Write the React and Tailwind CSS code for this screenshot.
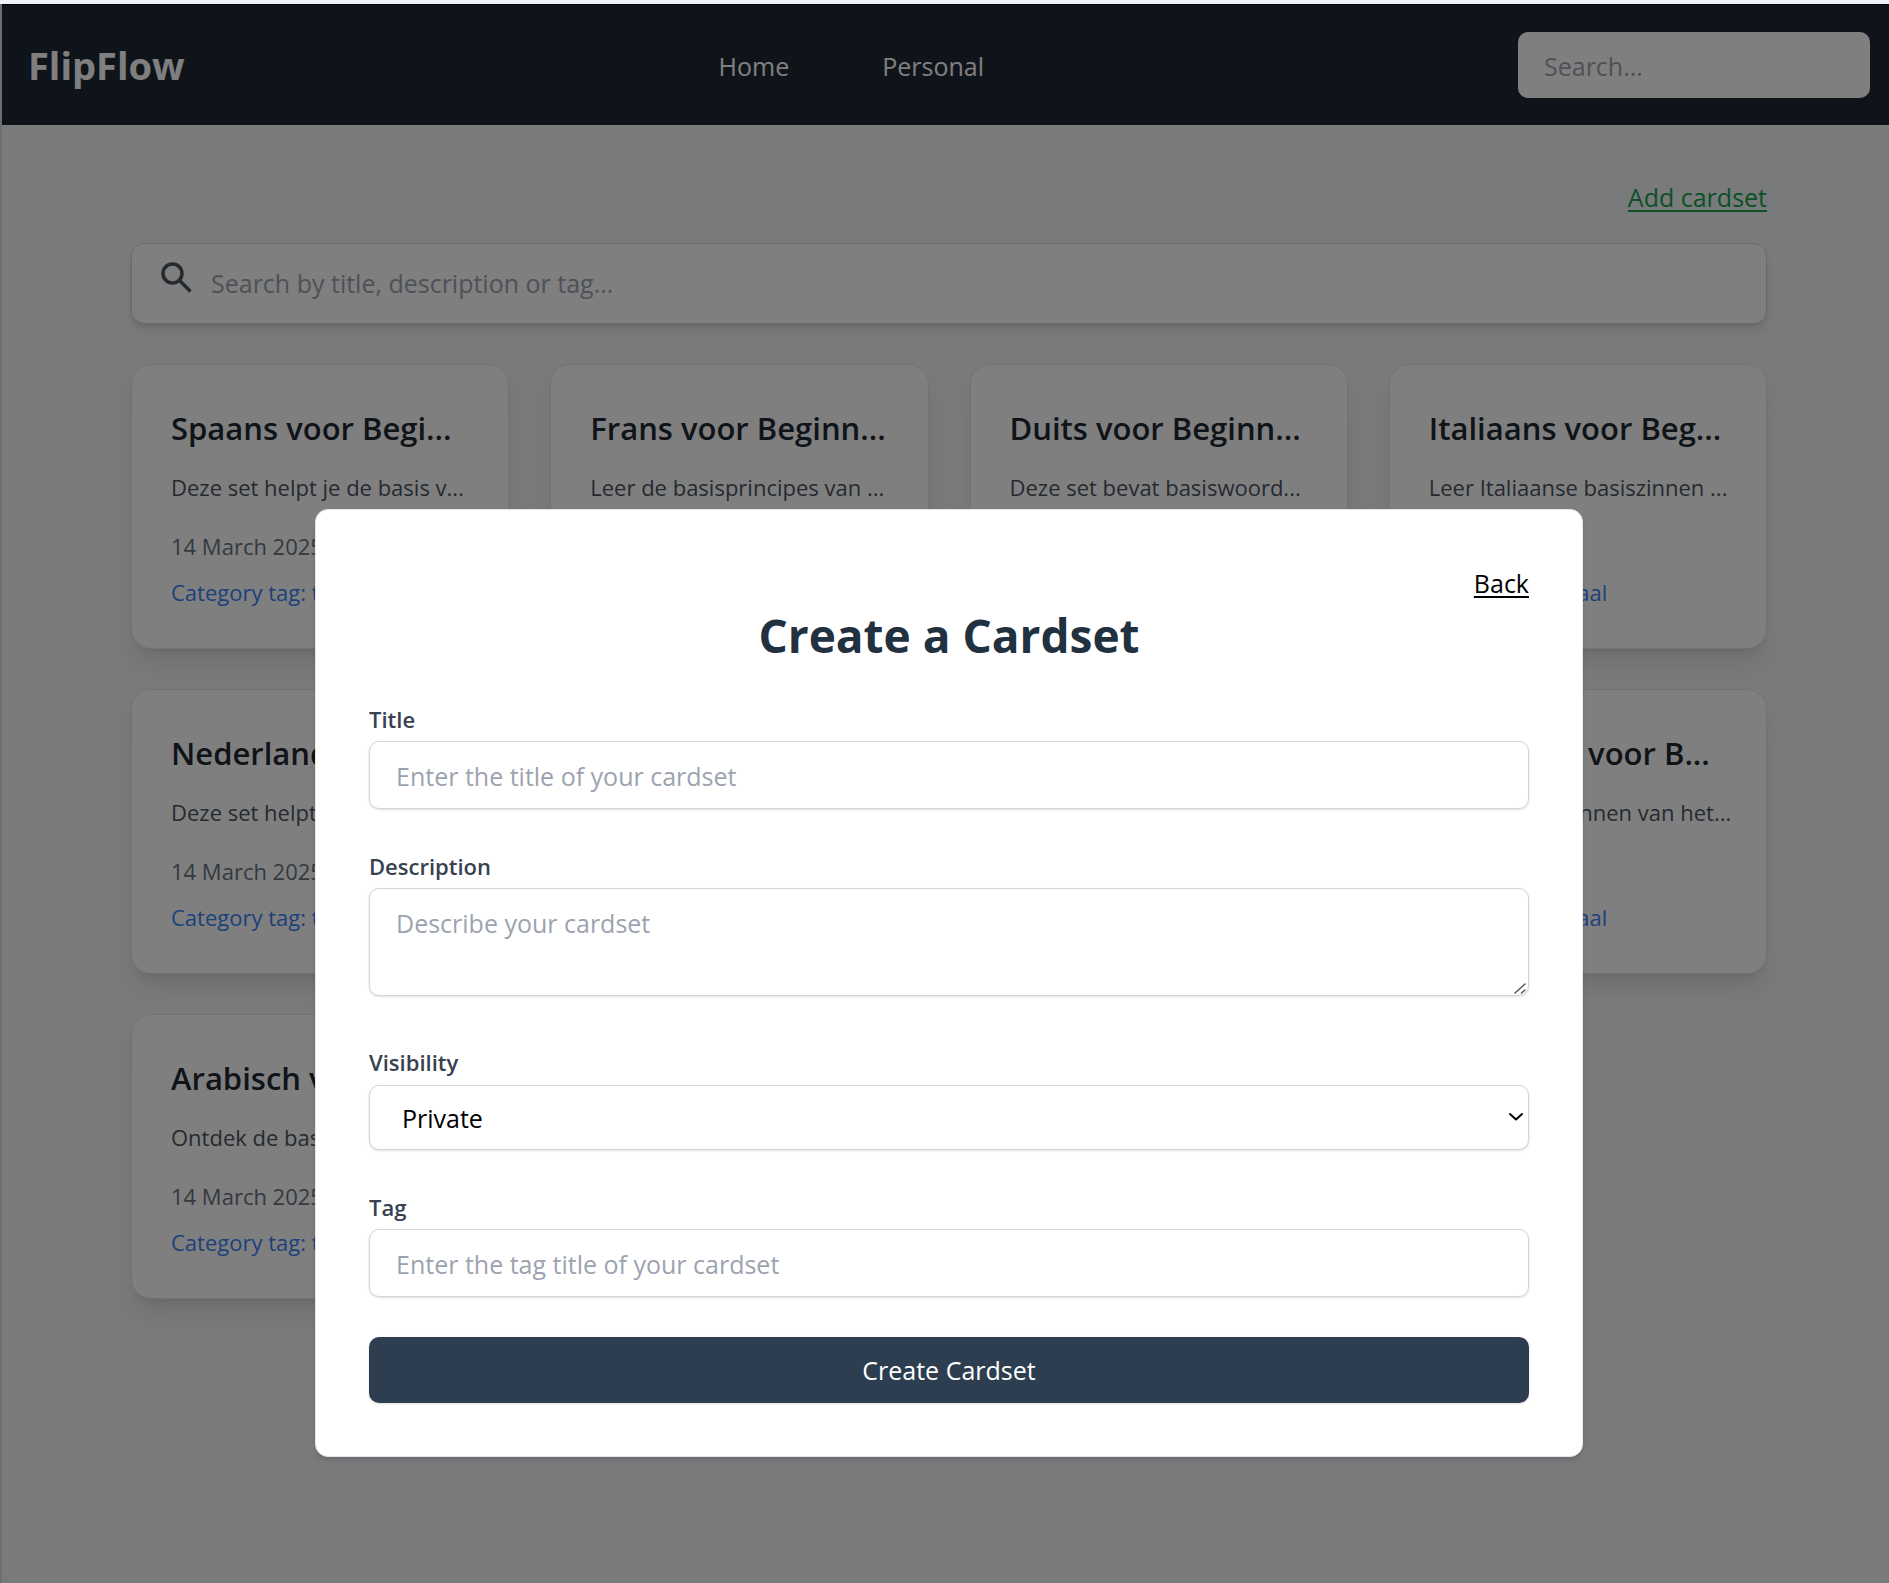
import React from "react";

const cards = [
  { title: "Spaans voor Begi...", text: "Deze set helpt je de basis v..." },
  { title: "Frans voor Beginn...", text: "Leer de basisprincipes van ..." },
  { title: "Duits voor Beginn...", text: "Deze set bevat basiswoord..." },
  { title: "Italiaans voor Beg...", text: "Leer Italiaanse basiszinnen ..." },
  { title: "Nederlands voor...", text: "Deze set helpt je de basis v..." },
  { title: "Engels voor Begi...", text: "Leer de basisprincipes van ..." },
  { title: "Chinees voor Be...", text: "Deze set bevat basiswoord..." },
  { title: "Portugees voor B...", text: "Leer de basiszinnen van het..." },
  { title: "Arabisch voor B...", text: "Ontdek de basis van het..." },
];

function Card({ title, text }) {
  return (
    <article className="min-w-0 rounded-[20px] border border-gray-200 bg-white px-[39px] pt-10 pb-[39px] shadow-[0_16px_25px_-5px_rgb(0_0_0/0.1),0_6px_10px_-6px_rgb(0_0_0/0.1)]">
      <h3 className="mb-[19px] text-[31px] leading-[47px] font-semibold whitespace-nowrap text-[#1f2933]">{title}</h3>
      <p className="mb-[26px] text-[22px] leading-[33px] whitespace-nowrap text-[#4b5563]">{text}</p>
      <p className="mb-[13px] text-[22px] leading-[33px] text-[#6b7280]">14 March 2025</p>
      <p className="text-[22px] leading-[33px] text-[#3b82f6]">Category tag: taal</p>
    </article>
  );
}

const field =
  "block w-full rounded-[10px] border border-gray-300 bg-white px-[26px] text-[25px] text-black shadow-sm placeholder:text-[#9ca3af] placeholder:opacity-100";
const labelStyle = "mb-[5px] block text-[22px] leading-[33px] font-semibold text-[#374151]";

function CreateDialog() {
  return (
    <div role="dialog" aria-labelledby="dialog-title" className="w-full max-w-[1268px] rounded-[13px] border border-gray-200 bg-white p-[53px] shadow-md">
      <div className="flex justify-end">
        <button type="button" className="text-[25px] leading-10 text-black underline decoration-2 underline-offset-3">Back</button>
      </div>
      <h1 id="dialog-title" className="mb-[38px] pt-[2px] text-center text-[46px] leading-[60px] font-bold text-[#213140]">Create a Cardset</h1>
      <form>
        <div className="mb-[41px]">
          <label htmlFor="title" className={labelStyle}>Title</label>
          <input id="title" type="text" placeholder="Enter the title of your cardset" className={`${field} h-[68px] pt-[2px]`} />
        </div>
        <div className="mb-[50px]">
          <label htmlFor="description" className={labelStyle}>Description</label>
          <div className="relative">
            <textarea id="description" placeholder="Describe your cardset" className={`${field} h-[108px] resize-none py-[14px] leading-10`} />
            <svg className="pointer-events-none absolute right-[3px] bottom-[2px] h-[11px] w-[12px]" viewBox="0 0 12 11" fill="none" stroke="#555" strokeWidth="1.5" strokeLinecap="round">
              <path d="M1 10 11 1M7.5 10l3.5-3" />
            </svg>
          </div>
        </div>
        <div className="mb-[41px]">
          <label htmlFor="visibility" className={labelStyle}>Visibility</label>
          <div className="relative pt-px">
            <select id="visibility" defaultValue="Private" className={`${field} h-[65px] appearance-none pt-[2px] pl-8`}>
              <option>Private</option>
              <option>Public</option>
            </select>
            <svg className="pointer-events-none absolute top-[28px] right-[5px] h-[10px] w-4" viewBox="0 0 16 10" fill="none" stroke="#000" strokeWidth="2" strokeLinecap="round" strokeLinejoin="round">
              <path d="M2 2l6 5.5L14 2" />
            </svg>
          </div>
        </div>
        <div className="mb-10">
          <label htmlFor="tag" className={labelStyle}>Tag</label>
          <input id="tag" type="text" placeholder="Enter the tag title of your cardset" className={`${field} h-[68px] pt-[2px]`} />
        </div>
        <button type="submit" className="h-[66px] w-full rounded-[10px] bg-[#2c3e50] pt-[2px] text-[25px] font-medium text-white shadow-sm">Create Cardset</button>
      </form>
    </div>
  );
}

export default function App() {
  return (
    <div className="flex min-h-screen flex-col overflow-hidden font-['Open_Sans','Noto_Sans',sans-serif]">
      <div className="h-1 shrink-0 bg-[#f0f2f9]" />
      <div className="flex grow border-l-2 border-[#6f6f6f]">
        <div className="relative -mr-[7px] min-w-0 grow border-t border-black bg-[#f3f4f6]">
          <header className="flex items-center justify-between bg-[#1f2835] px-[26px] pt-[26px] pb-[27px]">
            <span className="pt-px text-[38px] leading-[66px] font-bold text-white">FlipFlow</span>
            <nav className="flex gap-[93px] pt-[2px] text-[25px] leading-10 text-white">
              <a href="#home">Home</a>
              <a href="#personal">Personal</a>
            </nav>
            <input type="search" aria-label="Search" placeholder="Search..." className="h-[66px] w-[352px] rounded-[10px] bg-white px-[26px] pt-[2px] text-[25px] placeholder:text-[#9ca3af] placeholder:opacity-100" />
          </header>
          <main className="px-[129px] pt-[52px]">
            <div className="flex justify-end">
              <a href="#add" className="text-[25px] leading-10 text-[#16a34a] underline decoration-2 underline-offset-3">Add cardset</a>
            </div>
            <div className="mt-[26px] flex h-[81px] items-center rounded-[13px] border border-gray-300 bg-white px-[27px] shadow-[0_7px_10px_-2px_rgb(0_0_0/0.1),0_3px_7px_-3px_rgb(0_0_0/0.1)]">
              <svg className="mb-3 h-[34px] w-[34px] shrink-0 text-[#4b5563]" viewBox="0 0 34 34" fill="none" stroke="currentColor" strokeWidth="3.5">
                <circle cx="13.5" cy="12.5" r="9.5" />
                <path d="M20.5 19.5 31.5 30.5" />
              </svg>
              <input type="search" aria-label="Search cardsets" placeholder="Search by title, description or tag..." className="ml-[18px] min-w-0 grow bg-transparent text-[25px] placeholder:text-[#9ca3af] placeholder:opacity-100" />
            </div>
            <section className="mt-10 grid grid-cols-4 gap-x-[41px] gap-y-10">
              {cards.map((card) => (
                <Card key={card.title} {...card} />
              ))}
            </section>
          </main>
          <div className="absolute inset-0 flex items-start justify-center bg-black/50 pt-[504px]">
            <CreateDialog />
          </div>
        </div>
      </div>
    </div>
  );
}
